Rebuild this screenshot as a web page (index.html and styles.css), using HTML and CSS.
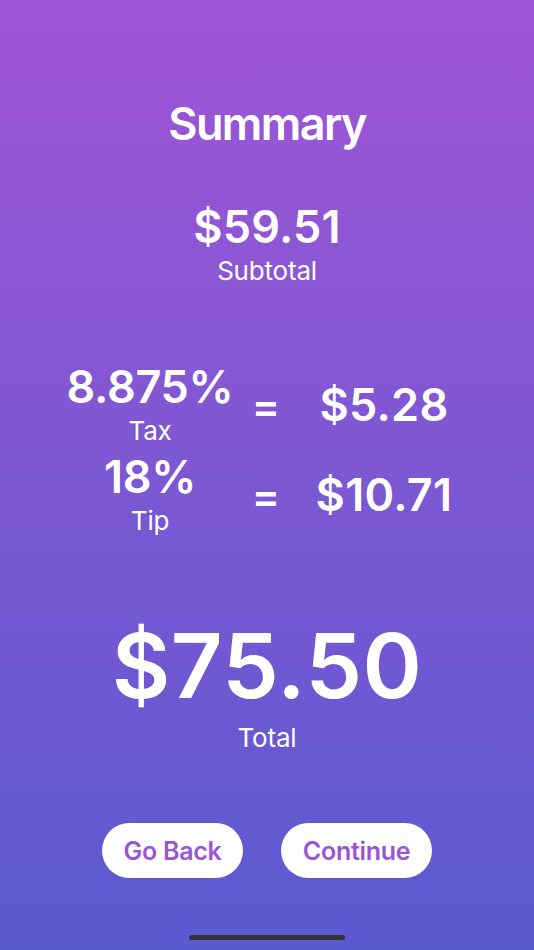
FILE: index.html
```
<!DOCTYPE html>
<html lang="en">
<head>
<meta charset="utf-8">
<title>Summary</title>
<link rel="stylesheet" href="styles.css">
</head>
<body>
<main class="screen">
  <h1 class="title">Summary</h1>
  <div class="amount">$59.51</div>
  <div class="label">Subtotal</div>

  <section class="calc">
    <div class="calc-row">
      <div class="rate">
        <div class="rate-value">8.875%</div>
        <div class="label">Tax</div>
      </div>
      <div class="equals">=</div>
      <div class="result">$5.28</div>
    </div>
    <div class="calc-row calc-row-tip">
      <div class="rate">
        <div class="rate-value">18%</div>
        <div class="label">Tip</div>
      </div>
      <div class="equals">=</div>
      <div class="result">$10.71</div>
    </div>
  </section>

  <div class="total">$75.50</div>
  <div class="label total-label">Total</div>

  <div class="actions">
    <button class="btn btn-back">Go Back</button>
    <button class="btn btn-continue">Continue</button>
  </div>

  <div class="home-indicator"></div>
</main>
</body>
</html>
```
FILE: styles.css
```
* { box-sizing: border-box; }
html, body { margin: 0; padding: 0; }
body {
  font-family: Inter, "Noto Sans", "Liberation Sans", sans-serif;
  color: #ffffff;
}
.screen {
  width: 534px;
  height: 950px;
  background: linear-gradient(to bottom, #a055d6 0%, #5a5ad0 100%);
  display: flex;
  flex-direction: column;
  align-items: center;
  padding-top: 101px;
  overflow: hidden;
}
.title {
  margin: 0;
  font-size: 45px;
  line-height: 1;
  font-weight: 600;
  letter-spacing: -1.6px;
}
.amount {
  margin-top: 58px;
  font-size: 45px;
  line-height: 1;
  font-weight: 600;
  letter-spacing: 0.2px;
}
.label {
  margin-top: 9px;
  font-size: 26px;
  line-height: 1;
  font-weight: 400;
  letter-spacing: -0.2px;
}
.calc {
  margin-top: 80px;
  width: 534px;
  display: flex;
  flex-direction: column;
}
.calc-row {
  display: grid;
  grid-template-columns: 180px 52px 184px;
  margin-left: 60px;
  align-items: center;
}
.calc-row-tip { margin-top: 10px; }
.rate {
  display: flex;
  flex-direction: column;
  align-items: center;
}
.rate-value {
  font-size: 45px;
  line-height: 1;
  font-weight: 600;
  letter-spacing: -0.3px;
}
.equals {
  text-align: center;
  font-size: 42px;
  line-height: 1;
  font-weight: 600;
  position: relative;
  top: 2px;
}
.result {
  text-align: center;
  font-size: 45px;
  line-height: 1;
  font-weight: 600;
  letter-spacing: 0.3px;
}
.total {
  margin-top: 87px;
  font-size: 90px;
  line-height: 1;
  font-weight: 600;
  letter-spacing: 0.5px;
}
.total-label { margin-top: 14px; }
.actions {
  margin-top: 72px;
  display: flex;
  justify-content: center;
  gap: 38px;
}
.btn {
  height: 55px;
  border: none;
  border-radius: 28px;
  background: #ffffff;
  color: #9a55d4;
  font-family: inherit;
  font-size: 25px;
  font-weight: 600;
  letter-spacing: -0.3px;
  padding: 0;
}
.btn-back { width: 141px; }
.btn-continue { width: 151px; }
.home-indicator {
  margin-top: 57px;
  width: 156px;
  height: 5px;
  border-radius: 3px;
  background: #333333;
}
```
